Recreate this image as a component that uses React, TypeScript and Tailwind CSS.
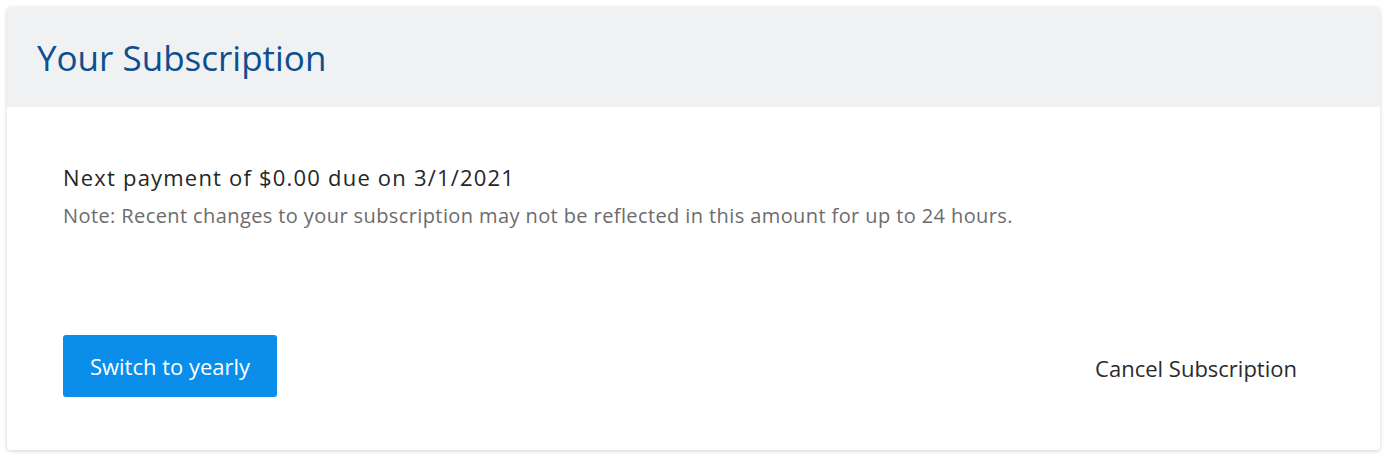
import React from 'react';

const App: React.FC = () => {
  return (
    <div className="w-[1387px] h-[460px] bg-white px-[7px] pt-[7px] font-['Open_Sans','Lato',sans-serif]">
      <div className="bg-white rounded-[4px] shadow-[0_1px_4px_rgba(0,0,0,0.18)] overflow-hidden">
        {/* Header */}
        <div className="h-[100px] bg-[#f0f1f3] flex items-center pl-[30px]">
          <h1 className="text-[35px] leading-none text-[#0d4f8e]">Your Subscription</h1>
        </div>

        {/* Body */}
        <div className="flex flex-col pt-[56px] pl-[56px] pr-[83px] pb-[53px]">
          <div className="text-[22px] leading-[28px] font-medium tracking-[1.2px] text-[#262626]">Next payment of $0.00 due on 3/1/2021</div>
          <div className="mt-[12px] text-[20px] leading-[26px] tracking-[0.4px] text-[#6c6c6c]">
            Note: Recent changes to your subscription may not be reflected in this amount for up to 24 hours.
          </div>

          <div className="mt-[106px] flex items-center justify-between">
            <button className="w-[214px] h-[62px] rounded-[3px] bg-[#0a8ee9] text-white text-[22px] leading-[30px]">Switch to yearly</button>
            <button className="text-[22px] leading-[30px] pt-[4px] text-[#2b2b2b]">Cancel Subscription</button>
          </div>
        </div>
      </div>
    </div>
  );
};

export default App;
